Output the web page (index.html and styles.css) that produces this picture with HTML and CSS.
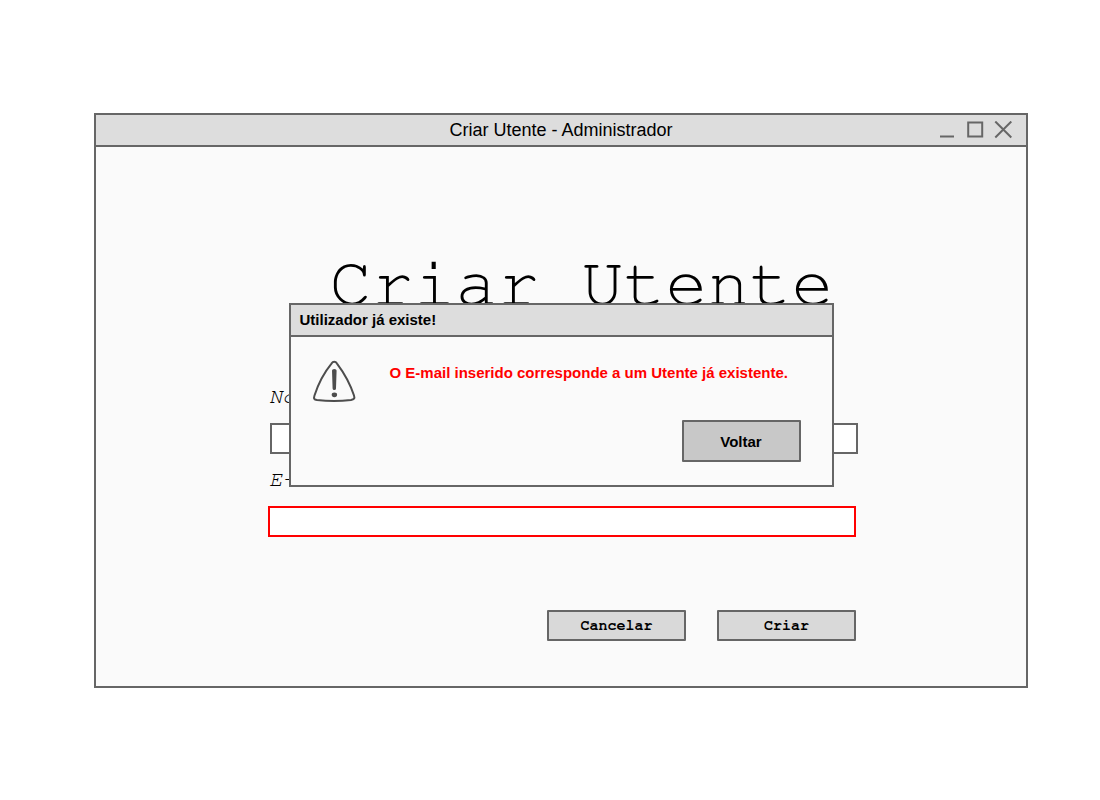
FILE: index.html
```html
<!DOCTYPE html>
<html lang="pt">
<head>
<meta charset="utf-8">
<title>Criar Utente - Administrador</title>
<link rel="stylesheet" href="styles.css">
</head>
<body>
<main class="window">
  <header class="titlebar">
    <span class="titlebar-text">Criar Utente - Administrador</span>
    <div class="controls">
      <button class="control" type="button" aria-label="Minimizar"><svg width="18" height="18" viewBox="0 0 18 18"><path d="M2 15.500H16"/></svg></button>
      <button class="control" type="button" aria-label="Maximizar"><svg width="18" height="18" viewBox="0 0 18 18"><path d="M2.200 1.500H16.200V15.500H2.200Z"/></svg></button>
      <button class="control" type="button" aria-label="Fechar"><svg width="18" height="18" viewBox="0 0 18 18"><path d="M1.300 0.500L17.300 16.500M17.300 0.500L1.300 16.500"/></svg></button>
    </div>
  </header>
  <div class="content">
    <h1 class="heading">Criar Utente</h1>
    <form class="form">
      <label class="label" for="name">Nome</label>
      <input class="field field-name" id="name" type="text">
      <label class="label" for="email">E-mail</label>
      <input class="field field-error" id="email" type="text">
      <div class="actions">
        <button class="action" type="button">Cancelar</button>
        <button class="action" type="button">Criar</button>
      </div>
    </form>
  </div>
  <section class="dialog" role="alertdialog" aria-labelledby="dialog-title">
    <h2 class="dialog-title" id="dialog-title">Utilizador já existe!</h2>
    <div class="dialog-body">
      <svg class="warning" width="44" height="44" viewBox="0 0 44 44" aria-hidden="true">
        <path class="warning-edge" d="M19.500 4.600C21 2 23.500 2 25 4.600C31 12.500 38 24.500 42 36.500C43 39.500 42 40.500 39 41C28 42.200 16 42.200 5 41C2 40.500 1.500 39.500 2.500 36.500C6 25.500 13 12.500 19.500 4.600Z"/>
        <path class="warning-mark" d="M20 11.500Q20 10 22.300 10T24.600 11.500L24 29.500Q24 31 22.300 31T20.600 29.500Z"/>
        <ellipse class="warning-mark" cx="22.400" cy="35.800" rx="2.700" ry="2.400"/>
      </svg>
      <p class="message">O E-mail inserido corresponde a um Utente já existente.</p>
      <button class="back" type="button">Voltar</button>
    </div>
  </section>
</main>
</body>
</html>
```
FILE: styles.css
```css
* {
  box-sizing: border-box;
}

body {
  margin: 0;
  background: #fff;
  color: #000;
  font-family: "Liberation Sans", Arial, sans-serif;
}

.window {
  position: relative;
  margin: 113px 72px 112px 94px;
  border: 2px solid #666;
  background: #fafafa;
}

.titlebar {
  display: grid;
  grid-template-columns: 1fr auto 1fr;
  align-items: center;
  height: 32px;
  border-bottom: 2px solid #666;
  background: #ddd;
  font-size: 18px;
}

.titlebar-text {
  grid-column: 2;
}

.controls {
  display: flex;
  justify-content: flex-end;
  gap: 10px;
  padding-right: 14px;
}

.control {
  padding: 0;
  border: 0;
  background: none;
  line-height: 0;
}

.control path {
  fill: none;
  stroke: #666;
  stroke-width: 2;
}

.content {
  padding: 97px 0 45px 4px;
}

.heading {
  margin: 0 0 58px;
  padding-left: 37px;
  font: 400 70px/80px "FreeMono", "Nimbus Mono PS", "Courier", "Courier New", "Liberation Mono", monospace;
  text-align: center;
}

.form {
  width: 590px;
  margin: 0 auto;
}

.label {
  display: block;
  padding: 0 1px;
  font: italic 22px/28px "FreeMono", "Nimbus Mono PS", "Courier", "Courier New", "Liberation Mono", monospace;
}

.field {
  display: block;
  width: 588px;
  height: 31px;
  margin: 13px 0 11px;
  border: 2px solid #666;
  background: #fff;
  font-size: 16px;
}

.field-name {
  margin-left: 2px;
}

.field-error {
  border-color: #f00;
}

.actions {
  display: flex;
  justify-content: flex-end;
  gap: 31px;
  padding: 62px 2px 0 0;
}

.action {
  width: 139px;
  height: 31px;
  padding: 0;
  border: 2px solid #666;
  border-radius: 1px;
  background: #d9d9d9;
  color: #000;
  font: bold 15px/20px "FreeMono", "Nimbus Mono PS", "Courier", "Courier New", "Liberation Mono", monospace;
}

.dialog {
  position: absolute;
  top: 188px;
  left: 0;
  right: 0;
  width: 545px;
  margin: 0 auto;
  border: 2px solid #666;
  background: #fafafa;
}

.dialog-title {
  margin: 0;
  padding: 0 9px;
  border-bottom: 2px solid #666;
  background: #ddd;
  font-size: 15px;
  line-height: 30px;
}

.dialog-body {
  display: grid;
  grid-template-columns: 44px 1fr;
  column-gap: 34px;
  padding: 22px 31px 23px 21px;
}

.warning-edge {
  fill: none;
  stroke: #4d4d4d;
  stroke-width: 2;
}

.warning-mark {
  fill: #4d4d4d;
}

.message {
  margin: 5px 0 0;
  color: #f00;
  font-size: 15px;
  font-weight: bold;
  line-height: 18px;
}

.back {
  grid-column: 2;
  justify-self: end;
  width: 119px;
  height: 42px;
  margin-top: 17px;
  border: 2px solid #666;
  border-radius: 1px;
  background: #c8c8c8;
  color: #000;
  font: bold 15px "Liberation Sans", Arial, sans-serif;
}
```
